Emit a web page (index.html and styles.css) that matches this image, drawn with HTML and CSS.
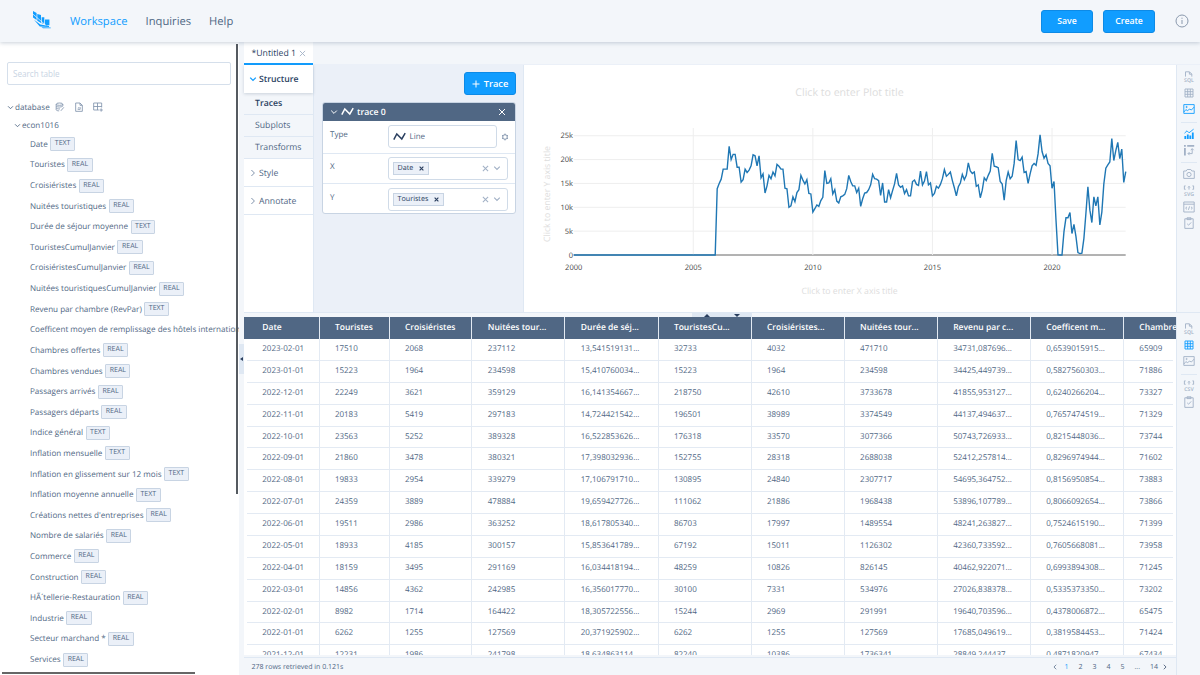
FILE: index.html
```html
<!DOCTYPE html>
<html lang="en">
<head>
    <meta charset="UTF-8">
    <meta name="viewport" content="width=device-width, initial-scale=1.0">
    <title>Workspace</title>
    <link rel="stylesheet" href="styles.css">
</head>
<body>
    <svg class="sprite" xmlns="http://www.w3.org/2000/svg">
        <symbol id="i-down" viewBox="0 0 8 8"><path d="M1.2 2.6 4 5.4l2.8-2.8"/></symbol>
        <symbol id="i-right" viewBox="0 0 8 8"><path d="M2.4 1 5.4 4l-3 3"/></symbol>
        <symbol id="i-close" viewBox="0 0 8 8"><path d="m1 1 6 6M7 1 1 7"/></symbol>
        <symbol id="i-line" viewBox="0 0 13 9"><path d="M.8 7.6 3.8 2l5 5L12.2 1.2"/></symbol>
        <symbol id="i-sql" viewBox="0 0 12 12"><path d="M2.5 5.6V.8h4l2.3 2.3v2.5M6.4 1v2.2h2.4"/><text x="6" y="11" text-anchor="middle">SQL</text></symbol>
        <symbol id="i-grid" viewBox="0 0 12 12"><path d="M2 2h8v8H2zM4.7 2v8M7.3 2v8M2 4.7h8M2 7.3h8"/></symbol>
        <symbol id="i-image" viewBox="0 0 12 12"><path d="M.8 1.6h10.4v8.8H.8zM.9 9l2-2.4 1.8 1.2L6.4 6l2 1 2.8-3"/><circle cx="3.6" cy="4" r=".6"/></symbol>
        <symbol id="i-chart" viewBox="0 0 12 12"><path d="M1.5 5.2 4 2.8l2 2 4.6-3.6"/><path class="thick" d="M2.3 8v3M4.8 6.6V11M7.3 7.4V11M9.8 4.5V11"/></symbol>
        <symbol id="i-pivot" viewBox="0 0 12 12"><path class="thick" d="M1 1.8h1.8M4.2 1.8h7M1.9 4v7.4"/><path d="M5.2 9.6h4V4.8M6.6 8 5 9.6l1.6 1.6M7.8 6.2l1.4-1.6 1.5 1.6"/></symbol>
        <symbol id="i-camera" viewBox="0 0 12 12"><path d="M.7 3h2.5l1-1.5h3.6l1 1.5h2.5v7.4H.7z"/><circle cx="6" cy="6.5" r="2.1"/></symbol>
        <symbol id="i-svg" viewBox="0 0 12 12"><path d="M2.6.9H1.4v3.4h1.2M9.4.9h1.2v3.4H9.4M6 4.6V1.4M5 2.4l1-1 1 1"/><text x="6" y="10.9" text-anchor="middle">SVG</text></symbol>
        <symbol id="i-csv" viewBox="0 0 12 12"><path d="M2.6.9H1.4v3.4h1.2M9.4.9h1.2v3.4H9.4M6 4.6V1.4M5 2.4l1-1 1 1"/><text x="6" y="10.9" text-anchor="middle">CSV</text></symbol>
        <symbol id="i-code" viewBox="0 0 12 12"><path d="M.8 1h10.4v10H.8zM.8 3.2h10.4M4 5.8 2.6 7.1 4 8.4M8 5.8l1.4 1.3L8 8.4M6.6 5.4 5.4 8.8"/></symbol>
        <symbol id="i-clip" viewBox="0 0 12 12"><path d="M1.8 1.8h8.4v9.6H1.8zM4 .8h4v1.8H4zM4.2 6.8l1.4 1.4 2.6-2.8"/></symbol>
    </svg>

    <header class="navbar">
        <svg class="logo" viewBox="0 0 18 18">
            <path d="M0 0 3.6 2v7L0 6.6zM4.3 3l3.7.9v8L4.3 9.7zM8.7 6.2h2.6v6.6L8.7 12.2zM12 8.6h4.4v5.6H12zM1 8.8l6.4 4.8 8.6 1.3v1.1l-9.2-.4zM8.4 16.2l9.2.2.2.8H10z"/>
            <path class="cut" d="M0 3.2 13 14.4"/>
        </svg>
        <nav class="nav-links">
            <a class="active">Workspace</a>
            <a>Inquiries</a>
            <a>Help</a>
        </nav>
        <button class="btn nav-btn">Save</button>
        <button class="btn nav-btn">Create</button>
        <svg class="info" viewBox="0 0 14 14"><circle cx="7" cy="7" r="6"/><path d="M7 6v4M7 3.7v1.1"/></svg>
    </header>

    <div class="main">
        <aside class="sidebar">
            <input class="search" placeholder="Search table">
            <div class="tree-row db">
                <svg class="ic tiny"><use href="#i-down"/></svg><span>database</span>
                <svg class="ic db-icon" viewBox="0 0 12 12"><ellipse cx="5.4" cy="2.6" rx="4" ry="1.4"/><path d="M1.4 2.6v6.6c0 1 2 1.5 3.6 1.4M9.4 2.6v2.2M1.4 4.8c.8 1.6 6 1.7 8 .2M1.4 7c.7 1.2 3 1.5 4.6 1.3M7 10.6l3.6-4.2"/></svg>
                <svg class="ic db-icon" viewBox="0 0 12 12"><path d="M2 1.2h5.2L10 4v7.2H2zM7.2 1.2V4H10M4.4 8.8h3V6.2M4.6 7.4l1.8-.8"/></svg>
                <svg class="ic db-icon" viewBox="0 0 12 12"><path d="M7 9.6H.8V1.2h9.6v5.4M5.4 1.2v8.4M.8 5.4h9.6M7.8 9.6h4M9.8 7.6v4"/></svg>
            </div>
            <div class="tree-row table"><svg class="ic tiny"><use href="#i-down"/></svg><span>econ1016</span></div>
            <div id="fields"></div>
            <div class="scroll-y"></div>
            <div class="scroll-x"></div>
        </aside>
        <div class="gutter"><div class="collapse"><i></i></div></div>

        <div class="workspace">
            <div class="tabs">
                <div class="tab">*Untitled 1 <svg class="ic"><use href="#i-close"/></svg></div>
            </div>
            <div class="upper">
                <div class="menu">
                    <div class="menu-item open"><svg class="ic"><use href="#i-down"/></svg>Structure</div>
                    <div class="menu-sub selected">Traces</div>
                    <div class="menu-sub">Subplots</div>
                    <div class="menu-sub">Transforms</div>
                    <div class="menu-item"><svg class="ic"><use href="#i-right"/></svg>Style</div>
                    <div class="menu-item"><svg class="ic"><use href="#i-right"/></svg>Annotate</div>
                </div>
                <div class="panel">
                    <button class="btn add-trace"><svg class="ic" viewBox="0 0 8 8"><path d="M4 .5v7M.5 4h7"/></svg>Trace</button>
                    <div class="card">
                        <div class="card-head">
                            <svg class="ic"><use href="#i-down"/></svg>
                            <svg class="ic wave"><use href="#i-line"/></svg>
                            <span>trace 0</span>
                            <svg class="ic x"><use href="#i-close"/></svg>
                        </div>
                        <div class="field type">
                            <label>Type</label>
                            <div class="select"><svg class="ic wave"><use href="#i-line"/></svg>Line</div>
                            <svg class="ic gear" viewBox="0 0 8 8"><circle cx="4" cy="4" r="2.3"/><path d="M4 .6v1M4 6.4v1M1 2.3l.9.5M6.1 5.2l.9.5M1 5.7l.9-.5M6.1 2.8l.9-.5"/></svg>
                        </div>
                        <div class="field">
                            <label>X</label>
                            <div class="select"><span class="chip">Date <svg class="ic"><use href="#i-close"/></svg></span><svg class="ic clear"><use href="#i-close"/></svg><svg class="ic caret"><use href="#i-down"/></svg></div>
                        </div>
                        <div class="field">
                            <label>Y</label>
                            <div class="select"><span class="chip">Touristes <svg class="ic"><use href="#i-close"/></svg></span><svg class="ic clear"><use href="#i-close"/></svg><svg class="ic caret"><use href="#i-down"/></svg></div>
                        </div>
                    </div>
                </div>
                <div class="plot"><svg id="chart" width="652" height="247"></svg></div>
                <div class="rail">
                    <svg class="ic"><use href="#i-sql"/></svg>
                    <svg class="ic"><use href="#i-grid"/></svg>
                    <svg class="ic on"><use href="#i-image"/></svg>
                    <hr>
                    <svg class="ic on"><use href="#i-chart"/></svg>
                    <svg class="ic"><use href="#i-pivot"/></svg>
                    <hr>
                    <svg class="ic"><use href="#i-camera"/></svg>
                    <svg class="ic"><use href="#i-svg"/></svg>
                    <svg class="ic"><use href="#i-code"/></svg>
                    <svg class="ic"><use href="#i-clip"/></svg>
                </div>
            </div>
            <div class="splitter"><span class="grip"><i class="up"></i><i class="down"></i></span></div>
            <div class="lower">
                <div class="results">
                    <div class="grid" id="grid"></div>
                    <div class="footer">
                        <span>278 rows retrieved in 0.121s</span>
                        <div class="pages">
                            <svg class="ic prev"><use href="#i-right"/></svg>
                            <b>1</b><span>2</span><span>3</span><span>4</span><span>5</span><span>...</span><span>14</span>
                            <svg class="ic next"><use href="#i-right"/></svg>
                        </div>
                    </div>
                </div>
                <div class="rail">
                    <svg class="ic"><use href="#i-sql"/></svg>
                    <svg class="ic on"><use href="#i-grid"/></svg>
                    <svg class="ic"><use href="#i-image"/></svg>
                    <hr>
                    <svg class="ic"><use href="#i-csv"/></svg>
                    <svg class="ic"><use href="#i-clip"/></svg>
                </div>
            </div>
        </div>
    </div>
    <script src="script.js"></script>
</body>
</html>
```
FILE: styles.css
```css
* {
    box-sizing: border-box;
}
body {
    margin: 0;
    width: 1200px;
    height: 675px;
    overflow: hidden;
    font-family: "Open Sans", sans-serif;
    font-size: 8px;
    text-rendering: geometricPrecision;
    color: #506784;
    background-color: #f3f6fa;
    display: flex;
    flex-direction: column;
}
.sprite {
    position: absolute;
    width: 0;
    height: 0;
}
.sprite text {
    font-size: 5.2px;
    font-weight: 600;
    stroke: none;
    fill: currentColor;
}
.ic {
    width: 8px;
    height: 8px;
    fill: none;
    stroke: currentColor;
    stroke-width: 1;
    flex: none;
}
.thick {
    stroke-width: 1.8;
}
.btn {
    border: 1px solid #0d8ae6;
    border-radius: 3px;
    background-color: #119dff;
    color: white;
    font-family: inherit;
    font-weight: 600;
    padding: 0;
}

/* top bar */
.navbar {
    height: 42px;
    flex: none;
    display: flex;
    align-items: center;
    padding: 0 11px 0 33px;
    background-color: #f3f6fa;
    box-shadow: 0 1px 4px rgba(80, 103, 132, 0.3);
    position: relative;
    z-index: 2;
}
.logo {
    width: 18px;
    height: 18px;
    margin-top: -3px;
    fill: #119dff;
}
.logo .cut {
    fill: none;
    stroke: #f3f6fa;
    stroke-width: 0.7;
}
.nav-links {
    display: flex;
    gap: 18px;
    margin-left: 19px;
    margin-right: auto;
    font-size: 11.2px;
}
.nav-links .active {
    color: #119dff;
}
.nav-btn {
    width: 52px;
    height: 23px;
    font-size: 8.7px;
    margin-right: 10px;
}
.info {
    width: 14px;
    height: 14px;
    margin-left: 10px;
    fill: none;
    stroke: #8a99ad;
}
.main {
    flex: 1;
    min-height: 0;
    display: flex;
}

/* table tree */
.sidebar {
    width: 239px;
    background-color: white;
    position: relative;
    overflow: hidden;
    padding: 20px 8px 0 7px;
    white-space: nowrap;
    font-size: 8.1px;
}
.search {
    display: block;
    width: 224px;
    height: 23px;
    border: 1px solid #d5dfeb;
    border-radius: 2px;
    padding: 0 5px;
    font-family: inherit;
    font-size: 8.1px;
}
.search::placeholder {
    color: #c8d4e3;
}
.tree-row {
    display: flex;
    align-items: center;
    height: 18px;
}
.tree-row .tiny {
    width: 7px;
    height: 7px;
    margin-right: 1px;
}
.tree-row.db {
    margin-top: 13px;
}
.tree-row.table {
    padding-left: 7px;
}
.db-icon {
    width: 10px;
    height: 10px;
    margin-left: 5px;
    margin-right: 4px;
    color: #8093ac;
}
#fields {
    padding-left: 23px;
}
.field-row {
    height: 20.62px;
    display: flex;
    align-items: center;
}
.tag {
    border: 1px solid #c8d4e3;
    background-color: #ebf0f8;
    border-radius: 1px;
    font-size: 7px;
    line-height: 12px;
    padding: 0 3.5px;
    margin-left: 2.5px;
}
.scroll-y {
    position: absolute;
    top: 2px;
    right: 1px;
    width: 2px;
    height: 450px;
    background-color: #555a60;
}
.scroll-x {
    position: absolute;
    left: 2px;
    bottom: 1px;
    width: 193px;
    height: 2px;
    background-color: #666;
}
.gutter {
    width: 5px;
    padding-top: 302px;
}
.collapse {
    height: 30px;
    background-color: #dfe8f3;
    display: flex;
    align-items: center;
    justify-content: center;
}
.collapse i {
    border: 2px solid transparent;
    border-right: 3px solid #2a3f5f;
    border-left: 0;
}

/* workspace */
.workspace {
    flex: 1;
    min-width: 0;
    display: flex;
    flex-direction: column;
}
.tabs {
    height: 23px;
    border-bottom: 1px solid #ebf0f8;
}
.tab {
    width: 69px;
    height: 23px;
    padding: 1px 0 0 7.5px;
    display: flex;
    align-items: center;
    gap: 3px;
    background-color: white;
    border-bottom: 2px solid #119dff;
    font-size: 8.7px;
    color: #2a3f5f;
}
.tab .ic {
    width: 7px;
    height: 7px;
    color: #a2b1c6;
}
.upper {
    height: 247px;
    display: flex;
}
.menu {
    width: 70px;
    background-color: white;
    border-right: 1px solid #dfe8f3;
    font-size: 8.7px;
}
.menu-item {
    height: 28px;
    display: flex;
    align-items: center;
    gap: 2px;
    padding-left: 5px;
    border-bottom: 1px solid #dfe8f3;
}
.menu-item .ic {
    color: #8093ac;
}
.menu-item.open {
    color: #2a3f5f;
    font-weight: 600;
    border: 0;
    box-shadow: 0 1px 3px rgba(80, 103, 132, 0.25);
    position: relative;
}
.menu-item.open .ic {
    color: #119dff;
    stroke-width: 1.3;
}
.menu-sub {
    height: 22px;
    line-height: 21.5px;
    padding-left: 11px;
    background-color: #f3f6fa;
    border-bottom: 1px solid #dfe8f3;
}
.menu-sub.selected {
    color: #2a3f5f;
    font-weight: 600;
}
.panel {
    width: 210px;
    padding: 7px 7px 0 8px;
    background-color: #ebf0f8;
    border-right: 1px solid #dfe8f3;
    display: flex;
    flex-direction: column;
}
.add-trace {
    align-self: flex-end;
    width: 52px;
    height: 23px;
    font-size: 9.3px;
    display: flex;
    align-items: center;
    justify-content: center;
    gap: 4px;
}
.card {
    margin-top: 7px;
    height: 112px;
    background-color: white;
    border: 1px solid #c8d4e3;
    border-radius: 3px;
    overflow: hidden;
}
.card-head {
    margin: -1px -1px 0;
    height: 19px;
    background-color: #506784;
    color: white;
    font-size: 8.7px;
    font-weight: 600;
    display: flex;
    align-items: center;
    padding: 0 10px 0 8px;
    gap: 3px;
}
.wave {
    width: 13px;
    height: 9px;
    stroke-width: 1.5;
}
.card-head .x {
    margin-left: auto;
}
.field {
    height: 30.5px;
    display: flex;
    align-items: center;
    padding-left: 7px;
    border-bottom: 1px solid #dfe8f3;
}
.field.type {
    height: 32.5px;
}
.field:last-child {
    border: 0;
}
.field label {
    width: 57.5px;
    margin-top: -4px;
}
.select {
    width: 120.5px;
    height: 23px;
    border: 1px solid #d0dbe8;
    border-radius: 3px;
    padding: 0 6px 0 4px;
    display: flex;
    align-items: center;
    gap: 4px;
}
.type .select {
    width: 109px;
}
.type .wave {
    color: #2a3f5f;
}
.gear {
    margin-left: 4px;
    color: #8093ac;
}
.chip {
    display: flex;
    align-items: center;
    gap: 6px;
    height: 13px;
    padding: 0 4px;
    border: 1px solid #c8d4e3;
    background-color: #ebf0f8;
    font-size: 7.2px;
    color: #2a3f5f;
    margin-right: auto;
}
.chip .ic {
    width: 5px;
    height: 5px;
    stroke-width: 1.8;
}
.select .clear,
.select .caret {
    color: #a2b1c6;
    stroke-width: 1.2;
}
.select .clear {
    width: 7px;
    height: 7px;
}

/* plot */
.plot {
    width: 652px;
    background-color: white;
}
#chart {
    display: block;
}
#chart text {
    font-size: 7.5px;
    fill: #444;
}
#chart .hint {
    font-size: 8.7px;
    fill: #ddd;
}
#chart .title {
    font-size: 10.6px;
}
.rail {
    width: 24px;
    flex: none;
    border-left: 1px solid #dfe8f3;
    padding-top: 6px;
    display: flex;
    flex-direction: column;
    align-items: center;
    gap: 4.2px;
    color: #a2b1c6;
}
.rail .ic {
    width: 12px;
    height: 12px;
    stroke-width: 0.9;
}
.rail .on {
    color: #119dff;
}
.rail hr {
    width: 16px;
    border: 0;
    border-top: 1px solid #dfe8f3;
    margin: 2px 0 1px;
}
.splitter {
    height: 5px;
    border-top: 1px solid #dfe8f3;
    display: flex;
    justify-content: center;
}
.grip {
    width: 60px;
    height: 4px;
    background-color: #dfe8f3;
    display: flex;
    align-items: center;
    justify-content: space-around;
}
.grip i {
    border: 3px solid transparent;
}
.grip .up {
    border-top: 0;
    border-bottom-color: #2a3f5f;
}
.grip .down {
    border-bottom: 0;
    border-top-color: #2a3f5f;
}

/* results */
.lower {
    flex: 1;
    min-height: 0;
    display: flex;
}
.results {
    flex: 1;
    min-width: 0;
    display: flex;
    flex-direction: column;
}
.grid {
    height: 338px;
    overflow: hidden;
    background-color: white;
}
.row {
    display: grid;
    grid-template-columns: 72.6px 70px 82.9px 93px 93.1px 93.1px 93.1px 93.1px 93.1px 93.1px 93px;
    height: 21.87px;
    margin: 0 3px;
    border-bottom: 1px solid #e3eaf3;
}
.row div {
    padding-left: 15.3px;
    line-height: 20.6px;
    border-right: 1px solid #e3eaf3;
    white-space: nowrap;
    overflow: hidden;
}
.row.head {
    height: 22.2px;
    margin: 0;
    padding-left: 3px;
    background-color: #506784;
    border: 0;
    color: white;
    font-size: 8.5px;
    font-weight: 600;
}
.row.head div {
    line-height: 22px;
}
.footer {
    flex: 1;
    border-top: 1px solid #dfe8f3;
    margin-top: 2px;
    display: flex;
    align-items: center;
    justify-content: space-between;
    padding: 2px 8px 1px 7.5px;
    font-size: 7px;
}
.pages {
    display: flex;
    align-items: center;
    gap: 10px;
}
.pages b {
    font-weight: 400;
    color: #119dff;
}
.pages .ic {
    width: 6px;
    height: 6px;
}
.pages .prev {
    transform: scaleX(-1);
    margin-right: -4px;
}
.pages .next {
    margin-left: -6px;
    color: #2a3f5f;
}
```
FILE: script.js
```js
var fields = [
    ['Date', 'TEXT'], ['Touristes', 'REAL'], ['Croisiéristes', 'REAL'], ['Nuitées touristiques', 'REAL'],
    ['Durée de séjour moyenne', 'TEXT'], ['TouristesCumulJanvier', 'REAL'], ['CroisiéristesCumulJanvier', 'REAL'],
    ['Nuitées touristiquesCumulJanvier', 'REAL'], ['Revenu par chambre (RevPar)', 'TEXT'],
    ['Coefficent moyen de remplissage des hôtels internationaux', 'TEXT'], ['Chambres offertes', 'REAL'],
    ['Chambres vendues', 'REAL'], ['Passagers arrivés', 'REAL'], ['Passagers départs', 'REAL'],
    ['Indice général', 'TEXT'], ['Inflation mensuelle', 'TEXT'], ['Inflation en glissement sur 12 mois', 'TEXT'],
    ['Inflation moyenne annuelle', 'TEXT'], ["Créations nettes d'entreprises", 'REAL'], ['Nombre de salariés', 'REAL'],
    ['Commerce', 'REAL'], ['Construction', 'REAL'], ['HÃ´tellerie-Restauration', 'REAL'], ['Industrie', 'REAL'],
    ['Secteur marchand *', 'REAL'], ['Services', 'REAL']
];
document.getElementById('fields').innerHTML = fields.map(function (f) {
    return '<div class="field-row"><span>' + f[0] + '</span><span class="tag">' + f[1] + '</span></div>';
}).join('');

var head = 'Date|Touristes|Croisiéristes|Nuitées tour...|Durée de séj...|TouristesCu...|Croisiéristes...|Nuitées tour...|Revenu par c...|Coefficent m...|Chambres o...';
var rows = [
    '2023-02-01|17510|2068|237112|13,541519131...|32733|4032|471710|34731,087696...|0,6539015915...|65909',
    '2023-01-01|15223|1964|234598|15,410760034...|15223|1964|234598|34425,449739...|0,5827560303...|71886',
    '2022-12-01|22249|3621|359129|16,141354667...|218750|42610|3733678|41855,953127...|0,6240266204...|73327',
    '2022-11-01|20183|5419|297183|14,724421542...|196501|38989|3374549|44137,494637...|0,7657474519...|71329',
    '2022-10-01|23563|5252|389328|16,522853626...|176318|33570|3077366|50743,726933...|0,8215448036...|73744',
    '2022-09-01|21860|3478|380321|17,398032936...|152755|28318|2688038|52412,257814...|0,8296974944...|71602',
    '2022-08-01|19833|2954|339279|17,106791710...|130895|24840|2307717|54695,364752...|0,8156950854...|73883',
    '2022-07-01|24359|3889|478884|19,659427726...|111062|21886|1968438|53896,107789...|0,8066092654...|73866',
    '2022-06-01|19511|2986|363252|18,617805340...|86703|17997|1489554|48241,263827...|0,7524615190...|71399',
    '2022-05-01|18933|4185|300157|15,853641789...|67192|15011|1126302|42360,733592...|0,7605668081...|73958',
    '2022-04-01|18159|3495|291169|16,034418194...|48259|10826|826145|40462,922071...|0,6993894308...|71245',
    '2022-03-01|14856|4362|242985|16,356017770...|30100|7331|534976|27026,838378...|0,5335373350...|73202',
    '2022-02-01|8982|1714|164422|18,305722556...|15244|2969|291991|19640,703596...|0,4378006872...|65475',
    '2022-01-01|6262|1255|127569|20,371925902...|6262|1255|127569|17685,049619...|0,3819584453...|71424',
    '2021-12-01|12231|1986|241798|18,634863114...|82240|10386|1736341|28849,244437...|0,4871820947...|67434'
];
function cells(line) {
    return line.split('|').map(function (c) { return '<div>' + c + '</div>'; }).join('');
}
document.getElementById('grid').innerHTML = '<div class="row head">' + cells(head) + '</div>' +
    rows.map(function (r) { return '<div class="row">' + cells(r) + '</div>'; }).join('');

// monthly values in thousands, starting January 2006
var values = [
    13.9, 15, 15.9, 18, 18, 18, 22.8, 20, 21.1, 21.1, 18.4, 18.4,
    15.3, 15.8, 18, 17.3, 17.8, 18.7, 21, 20.8, 18.7, 20.8, 16.2, 17,
    13, 14.5, 16.7, 16, 17.4, 16.6, 19, 18.6, 18, 18, 14, 13.9,
    10, 10.3, 12.2, 11.2, 13.1, 13.7, 16.7, 15.7, 14.9, 15.8, 12.9, 12.8,
    9, 9.7, 10.5, 10.2, 11.4, 12.1, 17.7, 15, 15.1, 16, 12.8, 13.7,
    11.3, 10.9, 12.2, 12.4, 12.7, 13.9, 16.7, 15.4, 14.5, 14.5, 13.1, 14,
    10.2, 11.8, 13, 13.1, 13.7, 14.7, 16.9, 16, 15.9, 15.6, 12.5, 15.1,
    11.1, 11.1, 13.7, 12, 13.5, 14.9, 17.1, 14.7, 14.2, 14.5, 12.9, 13.7,
    12.4, 12.4, 15.4, 15.7, 14.8, 14.6, 17.6, 14.7, 15.5, 17.5, 14.7, 15.1,
    12.4, 12.9, 14.4, 14, 14.8, 16, 17.9, 16.5, 16.9, 17.4, 15.6, 14.1,
    12.4, 14.3, 15.1, 16.9, 15.8, 16.7, 19.3, 17.6, 17.1, 17.4, 14.4, 14.7,
    12, 13.6, 16.2, 15.6, 16.7, 17.6, 21.3, 18.6, 18.5, 18.3, 15.4, 14.9,
    11.5, 15.6, 17.4, 16, 16.5, 19.2, 24, 20, 19.8, 20.5, 17.3, 17.5,
    15, 17, 18.7, 19.2, 18.8, 21.2, 25.2, 21.7, 20.3, 21, 19.2, 18.7,
    14, 15.4, 7.3, 0.05, 0, 0, 4.9, 7.8, 7.8, 8.9, 4.5, 6.4,
    3.9, 0.5, 0.3, 0.4, 3.5, 8.7, 14.3, 9.4, 6.8, 12.2, 10.3, 12.2,
    6.3, 9, 14.9, 18.2, 18.9, 19.5, 24.4, 19.8, 21.9, 23.6, 20.2, 22.2,
    15.2, 17.5
];
var left = 49.7, right = 601.7, zero = 190, month = 1.993, unit = 4.77;
var out = '';
for (var k = 0; k <= 25; k += 5) {
    var y = zero - k * unit;
    out += '<path d="M' + left + ' ' + y + 'H' + right + '" stroke="' + (k ? '#eee' : '#666') + '"/>';
    out += '<text x="49" y="' + (y + 2.7) + '" text-anchor="end">' + (k ? k + 'k' : '0') + '</text>';
}
for (var i = 0; i < 5; i++) {
    var x = left + i * 60 * month;
    if (i) out += '<path d="M' + x + ' 63V190" stroke="#eee"/>';
    out += '<text x="' + x + '" y="205" text-anchor="middle">' + (2000 + i * 5) + '</text>';
}
var points = [[left, zero], [left + 71 * month, zero]].concat(values.map(function (v, n) {
    return [left + (72 + n) * month, zero - v * unit];
}));
out += '<polyline fill="none" stroke="#1f77b4" stroke-width="1.4" points="' + points.join(' ') + '"/>';
out += '<text class="hint title" x="325.5" y="31" text-anchor="middle">Click to enter Plot title</text>';
out += '<text class="hint" x="325.5" y="229" text-anchor="middle">Click to enter X axis title</text>';
out += '<text class="hint" transform="translate(26 129) rotate(-90)" text-anchor="middle">Click to enter Y axis title</text>';
document.getElementById('chart').innerHTML = out;
```
